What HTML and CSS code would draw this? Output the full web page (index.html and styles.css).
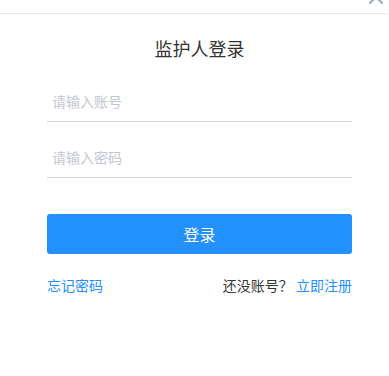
FILE: index.html
```html
<!DOCTYPE html>
<html lang="zh-CN">
<head>
<meta charset="utf-8">
<title>监护人登录</title>
<link rel="stylesheet" href="styles.css">
</head>
<body>
<div class="dialog">
  <div class="topbar">
    <svg class="close" viewBox="0 0 16 16" width="16" height="16" aria-hidden="true">
      <path d="M2 2 L14 14 M14 2 L2 14" stroke="#a3afbf" stroke-width="2.2" stroke-linecap="round" fill="none"/>
    </svg>
  </div>
  <h1 class="title">监护人登录</h1>
  <form class="form">
    <div class="field"><input class="input" type="text" placeholder="请输入账号"></div>
    <div class="field second"><input class="input" type="password" placeholder="请输入密码"></div>
    <button class="btn" type="button">登录</button>
    <div class="links">
      <a class="link" href="#">忘记密码</a>
      <span class="reg"><span class="muted">还没账号？</span> <a class="link" href="#">立即注册</a></span>
    </div>
  </form>
</div>
</body>
</html>
```
FILE: styles.css
```css
* { box-sizing: border-box; }
html, body { margin: 0; padding: 0; background: #fff; }
body {
  font-family: "Microsoft YaHei", "Noto Sans CJK SC", "Noto Sans", sans-serif;
  color: #333;
  width: 389px;
  height: 376px;
  overflow: hidden;
}
.dialog { position: relative; }
.topbar {
  position: relative;
  height: 14px;
  width: 387px;
  border-bottom: 1px solid #e8e8e8;
}
.close {
  position: absolute;
  right: 3px;
  top: -11px;
}
.title {
  margin: 22px 0 0;
  font-size: 18px;
  font-weight: normal;
  line-height: 24px;
  text-align: center;
  color: #333;
  padding-left: 10px;
}
.form {
  margin: 21px 0 0 47px;
  width: 305px;
  display: flex;
  flex-direction: column;
}
.field {
  height: 41px;
  border-bottom: 1px solid #d2d2d2;
}
.field.second { margin-top: 15px; }
.input {
  display: block;
  width: 100%;
  height: 40px;
  border: 0;
  outline: none;
  padding: 0 0 0 5px;
  font-family: inherit;
  font-size: 14px;
  color: #333;
  background: transparent;
}
.input::placeholder { color: #c4c6d0; }
.btn {
  margin-top: 36px;
  height: 40px;
  border: 0;
  border-radius: 3px;
  background: #2290ff;
  color: #fff;
  font-family: inherit;
  font-size: 16px;
  padding: 0;
}
.links {
  margin-top: 21px;
  display: flex;
  justify-content: space-between;
  font-size: 14px;
  line-height: 20px;
}
.link { color: #2290ff; text-decoration: none; }
.muted { color: #333; }
```
